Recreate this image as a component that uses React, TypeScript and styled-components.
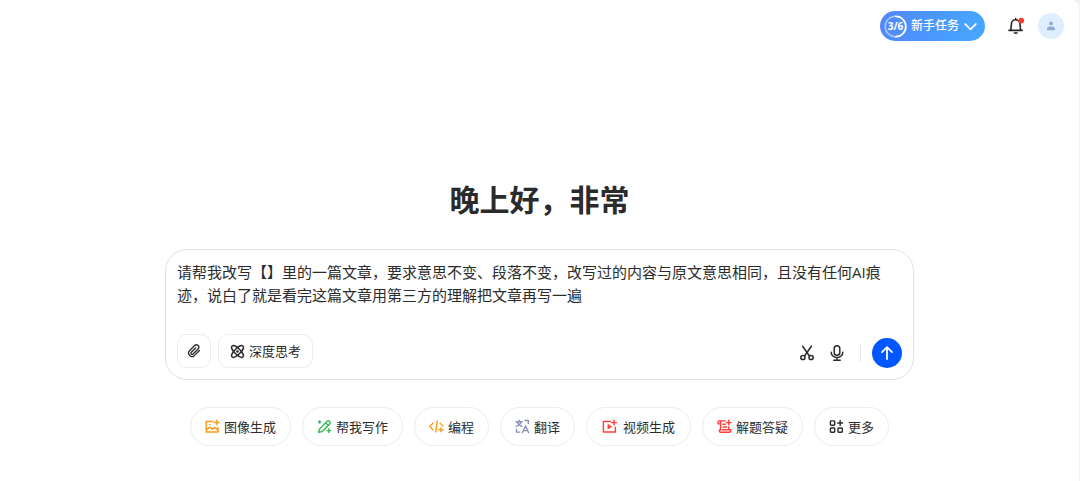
import React, { useState } from "react";
import styled, { createGlobalStyle } from "styled-components";

const GlobalStyle = createGlobalStyle`
  * { box-sizing: border-box; }
  body {
    margin: 0;
    background: #f2f2f3;
    color: #2b2b2b;
    font-family: "Open Sans", "Noto Sans CJK SC", sans-serif;
    font-size: 13px;
    line-height: 20px;
  }
  button, textarea { font: inherit; color: inherit; }
  button { cursor: pointer; }
  svg { display: block; flex: none; }
`;

const Page = styled.div`
  min-height: 100vh;
  margin-right: 1px;
  border-top-right-radius: 8px;
  background: #fff;
`;

const Header = styled.header`
  display: flex;
  justify-content: flex-end;
  align-items: center;
  height: 52px;
  padding: 0 15px;
`;

const TaskButton = styled.button`
  display: flex;
  align-items: center;
  gap: 4px;
  height: 30px;
  padding: 0 7px 0 4px;
  border: 0;
  border-radius: 15px;
  background: linear-gradient(100deg, #5287fc, #45a8ff);
  color: #fff;
  font-size: 12px;
  font-weight: 500;
  white-space: nowrap;
`;

const Progress = styled.span`
  display: grid;
  place-items: center;
  width: 23px;
  height: 23px;
  font-size: 10px;
  font-weight: 700;
  line-height: 12px;

  > * { grid-area: 1 / 1; }
`;

const BellButton = styled.button`
  margin: 0 13px 0 22px;
  padding: 0;
  border: 0;
  background: none;
`;

const Avatar = styled.button`
  display: grid;
  place-items: center;
  width: 26px;
  height: 26px;
  padding: 0;
  border: 0;
  border-radius: 50%;
  background: #deeeff;
`;

const Main = styled.main`
  display: flex;
  flex-direction: column;
  align-items: center;
  padding: 128px 16px 32px;
`;

const Greeting = styled.h1`
  margin: 0 0 29px;
  font-size: 30px;
  font-weight: 700;
  line-height: 40px;
`;

const Composer = styled.form`
  width: 100%;
  max-width: 749px;
  padding: 11px;
  border: 1px solid #e0e0e0;
  border-radius: 22px;
  background: #fff;
`;

const Prompt = styled.textarea`
  display: block;
  width: 100%;
  height: 60px;
  margin-bottom: 13px;
  padding: 0 12px 0 0;
  border: 0;
  outline: 0;
  resize: none;
  overflow: hidden;
  background: none;
  font-size: 15px;
  line-height: 23px;
  text-spacing-trim: space-all;
`;

const Toolbar = styled.div`
  display: flex;
  align-items: flex-end;
  justify-content: space-between;
`;

const Tools = styled.div`
  display: flex;
  align-items: center;
  gap: 7px;
`;

const ToolButton = styled.button`
  display: flex;
  align-items: center;
  justify-content: center;
  gap: 4px;
  min-width: 34px;
  height: 34px;
  padding: 0 8px;
  border: 1px solid #ececec;
  border-radius: 10px;
  background: #fff;
`;

const LabelledTool = styled(ToolButton)`
  padding: 0 11px;
`;

const Actions = styled.div`
  display: flex;
  align-items: center;
`;

const IconButton = styled.button`
  display: grid;
  place-items: center;
  width: 30px;
  height: 30px;
  padding: 0;
  border: 0;
  background: none;
`;

const Divider = styled.span`
  width: 1px;
  height: 17px;
  margin: 0 11px 0 8px;
  background: #e8e8e8;
`;

const SendButton = styled(IconButton)`
  border-radius: 50%;
  background: #0057ff;
`;

const Shortcuts = styled.nav`
  display: flex;
  flex-wrap: wrap;
  justify-content: center;
  gap: 11px;
  margin-top: 27px;
`;

const Chip = styled.button<{ $roomy?: boolean }>`
  display: flex;
  align-items: center;
  gap: ${(p) => (p.$roomy ? 6 : 4)}px;
  height: 39px;
  padding: 0 ${(p) => (p.$roomy ? 15 : 14)}px;
  border: 1px solid #ececec;
  border-radius: 20px;
  background: #fff;
  white-space: nowrap;
`;

type IconProps = { size?: number; color?: string; width?: number; children: React.ReactNode };

const Icon = ({ size = 15, color = "#2b2b2b", width = 1.5, children }: IconProps) => (
  <svg
    width={size}
    height={size}
    viewBox="0 0 16 16"
    fill="none"
    stroke={color}
    strokeWidth={width}
    strokeLinecap="round"
    strokeLinejoin="round"
    aria-hidden="true"
  >
    {children}
  </svg>
);

const shortcuts = [
  {
    label: "图像生成",
    color: "#ff9817",
    art: (
      <>
        <path d="M8.500 2.600H1.300v11.200h12.600V9" />
        <path d="M1.600 11.600l3.400-3 2.800 2.400 2.600-1.800 3.200 2.400M5 5.800h.4" />
        <path d="M12.600 1.200v5M10.100 3.700h5" />
      </>
    ),
  },
  {
    label: "帮我写作",
    color: "#35b955",
    art: (
      <>
        <path d="M1.800 14.200l.7-3.400L10.800 2.300a1.500 1.500 0 0 1 2.200 0l.7.7a1.500 1.500 0 0 1 0 2.200l-8.400 8.300-3.500.7zM9.400 4.200l2.600 2.600" />
        <path d="M2.800 1.800v2.600M1.500 3.100h2.600M12.600 10.400v4M10.600 12.400h4" />
      </>
    ),
  },
  {
    label: "编程",
    color: "#ff9817",
    art: (
      <>
        <path d="M4.2 4.4L1 8l3.2 3.6M8.800 2.200L7.200 13.800M11.800 4.4L15 7.600" />
        <path d="M12.8 9.200v4.400M10.600 11.400h4.400" />
      </>
    ),
  },
  {
    label: "翻译",
    color: "#8b91b8",
    art: (
      <>
        <path d="M1.2 3h6.6M4.5 1.4V3M2.4 3c.6 2.2 2.4 3.8 5 4.8M6.6 3C6 5.2 4.2 6.8 1.2 7.8" />
        <path d="M7.8 14.6L11.2 7.4l3.4 7.2M9 12.4h4.4M10.6 1.6h3.6v3.2M1.6 10.8v3.2h3.4" />
      </>
    ),
  },
  {
    label: "视频生成",
    color: "#ff3d38",
    roomy: true,
    art: (
      <>
        <path d="M9 2.600H1.500v11.200h12.800V8.800" />
        <path d="M6.300 6v4.600l3.800-2.300z" fill="#ff3d38" strokeWidth={0.8} />
        <path d="M12.900 1.400v5M10.400 3.900h5" />
      </>
    ),
  },
  {
    label: "解题答疑",
    color: "#ff3d38",
    art: (
      <>
        <path d="M9 2H2.200a1.200 1.200 0 0 0-1 1.200v2h2.600M3.800 2.400v9.400M12.600 8.400v2.800M5.800 11.400h8.800v1.400a1.400 1.400 0 0 1-1.400 1.400H4a1.400 1.400 0 0 1-1.400-1.400v-1" />
        <path d="M6.400 5.600h2.400M6.400 8.600h3.800M12.600 1.400v5M10.100 3.900h5" />
      </>
    ),
  },
  {
    label: "更多",
    color: "#2b2b2b",
    art: (
      <>
        <rect x="1.500" y="2" width="4.600" height="4.600" rx=".8" />
        <rect x="1.500" y="9.600" width="4.600" height="4.600" rx=".8" />
        <rect x="9.600" y="9.600" width="4.600" height="4.600" rx=".8" />
        <path d="M11.900 1.600v5.200M9.300 4.200h5.200" />
      </>
    ),
  },
];

export default function App() {
  const [text, setText] = useState(
    "请帮我改写【】里的一篇文章，要求意思不变、段落不变，改写过的内容与原文意思相同，且没有任何AI痕迹，说白了就是看完这篇文章用第三方的理解把文章再写一遍"
  );

  return (
    <>
      <GlobalStyle />
      <Page>
        <Header>
          <TaskButton type="button">
            <Progress>
              <svg width="23" height="23" viewBox="0 0 23 23" fill="none" strokeWidth="1.600" aria-hidden="true">
                <circle cx="11.500" cy="11.500" r="10.300" stroke="#a4c4ff" />
                <path d="M11.500 1.200a10.300 10.300 0 0 1 0 20.600" stroke="#fff" strokeLinecap="round" />
              </svg>
              <span>3/6</span>
            </Progress>
            新手任务
            <Icon color="#fff" width={1.9}>
              <path d="M2.400 5.400L8 11l5.600-5.600" />
            </Icon>
          </TaskButton>
          <BellButton type="button" aria-label="通知">
            <svg width="18" height="18" viewBox="0 0 18 18" fill="none" aria-hidden="true">
              <path
                d="M2 13.400h13.200M3.800 13.200l.6-6.200a4.300 4.300 0 0 1 8.600 0l.6 6.200M8.700 2.400V1.600"
                stroke="#262626"
                strokeWidth="1.600"
                strokeLinecap="round"
              />
              <path d="M6.400 15.200h4.600a2.300 1.800 0 0 1-4.600 0z" fill="#262626" />
              <circle cx="14.200" cy="3.600" r="2.900" fill="#ff3b30" />
            </svg>
          </BellButton>
          <Avatar type="button" aria-label="账户">
            <svg width="10" height="10" viewBox="0 0 10 10" fill="#93a9d1" aria-hidden="true">
              <circle cx="5" cy="2.400" r="1.900" />
              <path d="M1 9.300V8a2.600 2.600 0 0 1 2.600-2.600h2.800A2.600 2.600 0 0 1 9 8v1.300z" />
            </svg>
          </Avatar>
        </Header>

        <Main>
          <Greeting>晚上好，非常</Greeting>

          <Composer onSubmit={(e) => e.preventDefault()}>
            <Prompt aria-label="输入内容" spellCheck={false} value={text} onChange={(e) => setText(e.target.value)} />
            <Toolbar>
              <Tools>
                <ToolButton type="button" aria-label="添加附件">
                  <Icon size={14}>
                    <path d="M14.200 7.400l-5.900 5.900a3.900 3.900 0 0 1-5.500-5.500l6-6a2.700 2.700 0 0 1 3.900 3.900l-5.800 5.800a1.400 1.400 0 0 1-2-2l5-5" />
                  </Icon>
                </ToolButton>
                <LabelledTool type="button">
                  <Icon>
                    <ellipse cx="8" cy="8" rx="8.200" ry="3.200" transform="rotate(45 8 8)" />
                    <ellipse cx="8" cy="8" rx="8.200" ry="3.200" transform="rotate(-45 8 8)" />
                    <circle cx="8" cy="8" r=".7" fill="#2b2b2b" />
                  </Icon>
                  深度思考
                </LabelledTool>
              </Tools>
              <Actions>
                <IconButton type="button" aria-label="剪裁">
                  <Icon size={16}>
                    <path d="M3.600 1.200l6.700 9.600M12.400 1.200L5.700 10.800" />
                    <circle cx="3.900" cy="12.500" r="2.100" />
                    <circle cx="12.100" cy="12.500" r="2.100" />
                  </Icon>
                </IconButton>
                <IconButton type="button" aria-label="语音输入">
                  <Icon size={16}>
                    <rect x="5.200" y=".8" width="5.600" height="9.400" rx="2.800" />
                    <path d="M2.200 7.200a5.800 5.400 0 0 0 11.600 0M8 12.600v2.400M4.800 15.200h6.400" />
                  </Icon>
                </IconButton>
                <Divider />
                <SendButton type="submit" aria-label="发送">
                  <Icon size={16} color="#fff" width={1.8}>
                    <path d="M8 14V2.400M3 7.200l5-5 5 5" />
                  </Icon>
                </SendButton>
              </Actions>
            </Toolbar>
          </Composer>

          <Shortcuts aria-label="快捷功能">
            {shortcuts.map((s) => (
              <Chip key={s.label} type="button" $roomy={s.roomy}>
                <Icon color={s.color}>{s.art}</Icon>
                {s.label}
              </Chip>
            ))}
          </Shortcuts>
        </Main>
      </Page>
    </>
  );
}
